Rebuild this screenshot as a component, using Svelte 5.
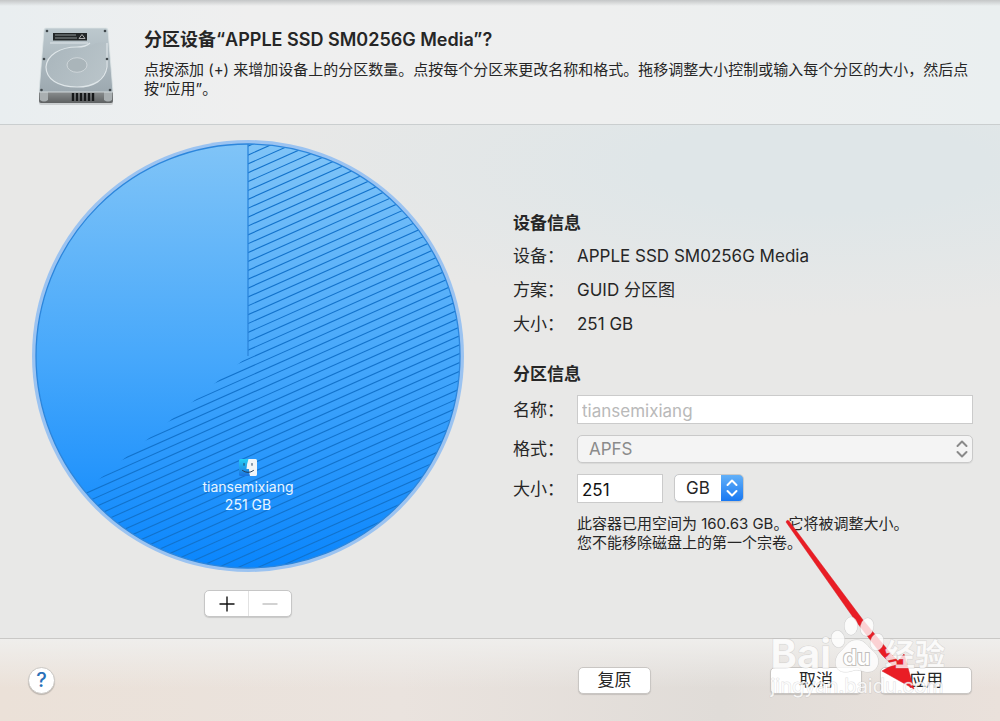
<script>
  const cx = 216, cy = 216, r = 212;
  const slope = 0.445;
  const hatch = Array.from({ length: 76 }, (_, i) => -100 + 8.87 * i + 8.6);
  const used = (160.63 / 251) * 2 * Math.PI;
  const ex = cx + r * Math.sin(used);
  const ey = cy - r * Math.cos(used);
  const sector = `M${cx} ${cy}V${cy - r}A${r} ${r} 0 1 1 ${ex} ${ey}Z`;
  let name = $state('tiansemixiang');
  let size = $state('251');
</script>

<div class="sheet">
  <header>
    <svg class="drive" viewBox="0 0 84 84" aria-hidden="true">
      <defs>
        <linearGradient id="plate" x1="0" y1="0" x2="0" y2="1">
          <stop offset="0" stop-color="#bdc9ce" /><stop offset="1" stop-color="#9da9b0" />
        </linearGradient>
        <linearGradient id="front" x1="0" y1="0" x2="0" y2="1">
          <stop offset="0" stop-color="#8d9192" /><stop offset="1" stop-color="#5e6162" />
        </linearGradient>
        <linearGradient id="disc" x1="0" y1="0" x2="1" y2="1">
          <stop offset="0" stop-color="#a3b0b7" /><stop offset="1" stop-color="#c6d0d4" />
        </linearGradient>
      </defs>
      <rect x="5" y="75" width="74" height="5" rx="2" fill="#0002" />
      <path d="M5 66H79V76Q79 78 77 78H7Q5 78 5 76Z" fill="url(#front)" />
      <path d="M6 67h8v8q-4 3-8 0zM70 67h8v8q-4 3-8 0z" fill="#a9afb1" />
      <path d="M39 68v8M43 68v8M47 68v8M51 68v8M55 68v8M59 68v8" stroke="#161819" stroke-width="2.400" />
      <path d="M12 3H72Q74 3 74 5L79 67H5L10 5Q10 3 12 3Z" fill="url(#plate)" stroke="#dde4e6" stroke-width=".8" />
      <path d="M72 20V42C70 55 60 62 43 62C24 62 12 54 12 42C13 30 26 22 43 22C52 22 58 21 62 18L72 17Z" fill="url(#disc)" opacity=".7" />
      <path d="M16 18H54M73 18V42C71 55 60 62 43 62C24 62 12 54 12 42C13 30 26 22 43 22C49 22 53 21 56 18" fill="none" stroke="#dfe6e9" stroke-width="1.200" />
      <ellipse cx="43" cy="40" rx="10" ry="7.300" fill="#aab5ba" stroke="#d5dcdf" stroke-width=".8" />
      <rect x="19" y="8" width="34" height="7.500" fill="#222627" />
      <path d="M21 10h21M21 13h22" stroke="#8d9496" stroke-width="1" />
      <path d="M45 13.500l3-4 3 4z" fill="none" stroke="#bbb" stroke-width=".9" />
      <g fill="#40484c"><circle cx="13" cy="6" r="1.300" /><circle cx="71" cy="6" r="1.300" /><circle cx="10" cy="34" r="1.300" /><circle cx="73" cy="34" r="1.300" /><circle cx="7.500" cy="65" r="1.300" /><circle cx="76" cy="65" r="1.300" /></g>
    </svg>
    <div class="intro">
      <h1>分区设备“APPLE SSD SM0256G Media”?</h1>
      <p>点按添加 (+) 来增加设备上的分区数量。点按每个分区来更改名称和格式。拖移调整大小控制或输入每个分区的大小，然后点按“应用”。</p>
    </div>
  </header>

  <main>
    <section class="chart">
      <div class="pie">
        <svg viewBox="0 0 432 432" aria-hidden="true">
          <defs>
            <linearGradient id="fill" x1="0" y1="0" x2="0" y2="1">
              <stop offset="0" stop-color="#80c4f7" /><stop offset=".5" stop-color="#47a8fb" /><stop offset="1" stop-color="#0a86fd" />
            </linearGradient>
            <clipPath id="used"><path d={sector} /></clipPath>
          </defs>
          <circle {cx} {cy} r="216" fill="#9bc3f1" />
          <circle {cx} {cy} {r} fill="url(#fill)" />
          <g clip-path="url(#used)" stroke="#1272cb" stroke-width="1.100">
            {#each hatch as y}
              <line x1="0" y1={y + cx * slope} x2="432" y2={y - cx * slope} />
            {/each}
          </g>
          <circle {cx} {cy} {r} fill="none" stroke="#2c86dc" stroke-width="1.300" />
          <path d="M216 4V216" stroke="#2c86dc" stroke-width="1.300" />
        </svg>
        <div class="volume">
          <svg viewBox="0 0 18 17" aria-hidden="true">
            <defs><linearGradient id="face" x1="0" y1="0" x2="0" y2="1"><stop offset="0" stop-color="#26cdf5" /><stop offset="1" stop-color="#1b72e0" /></linearGradient></defs>
            <rect width="18" height="17" rx="1.500" fill="url(#face)" />
            <path d="M9.500 0H16.500Q18 0 18 1.500V15.500Q18 17 16.500 17H11Q10 14 10 10H7.500Q8 4 9.500 0Z" fill="#f1f5f8" />
            <path d="M5 4.500v1.800M13 4.500v1.800M3.500 11.500Q9 15.500 14.500 11.500" fill="none" stroke="#23405e" stroke-width="1" stroke-linecap="round" />
          </svg>
          <span>tiansemixiang</span>
          <span>251 GB</span>
        </div>
      </div>
      <div class="segments">
        <button aria-label="添加"><svg viewBox="0 0 16 16"><path d="M8 .5v15M.5 8h15" stroke="#111" stroke-width="1.400" /></svg></button>
        <button aria-label="移除" disabled><svg viewBox="0 0 16 16"><path d="M.5 8h15" stroke="#b4b4b4" stroke-width="1.200" /></svg></button>
      </div>
    </section>

    <section class="info">
      <h2>设备信息</h2>
      <dl>
        <dt>设备：</dt><dd>APPLE SSD SM0256G Media</dd>
        <dt>方案：</dt><dd>GUID 分区图</dd>
        <dt>大小：</dt><dd>251 GB</dd>
      </dl>
      <h2>分区信息</h2>
      <form class="fields" onsubmit={(e) => e.preventDefault()}>
        <label for="name">名称：</label>
        <input id="name" bind:value={name} disabled />
        <label for="format">格式：</label>
        <div class="select wide">
          <select id="format" disabled><option>APFS</option></select>
          <svg viewBox="0 0 12 18" aria-hidden="true"><path d="M1.500 6L6 1.500L10.500 6M1.500 12L6 16.500L10.500 12" /></svg>
        </div>
        <label for="size">大小：</label>
        <div class="amount">
          <input id="size" bind:value={size} />
          <div class="select unit">
            <select aria-label="单位"><option>GB</option></select>
            <svg viewBox="0 0 12 18" aria-hidden="true"><path d="M1.500 6L6 1.500L10.500 6M1.500 12L6 16.500L10.500 12" /></svg>
          </div>
        </div>
        <p class="note">此容器已用空间为 160.63 GB。它将被调整大小。<br />您不能移除磁盘上的第一个宗卷。</p>
      </form>
    </section>
  </main>

  <footer>
    <button class="help" aria-label="帮助">?</button>
    <button class="push reset">复原</button>
    <button class="push">取消</button>
    <button class="push">应用</button>
  </footer>

  <svg class="arrow" viewBox="0 0 132 176" aria-hidden="true">
    <path d="M1 3Q2 0 4 2L78 101L107 136L113 142L119 135L129 170L97 152L107 146L97 136L70 101Z" fill="#e91d25" stroke="#d81b22" stroke-width=".5" />
  </svg>
  <div class="watermark">
    <div class="brand">
      <span>Bai</span>
      <span class="paw">
        <svg viewBox="0 0 54 58" aria-hidden="true">
          <g fill="#fffc" stroke="#bbb8" stroke-width="1">
            <ellipse cx="7" cy="23" rx="6.500" ry="8.500" transform="rotate(-12 7 23)" />
            <ellipse cx="20" cy="10" rx="6.500" ry="9" />
            <ellipse cx="36" cy="11" rx="6.500" ry="9" transform="rotate(12 36 11)" />
            <ellipse cx="46" cy="26" rx="6.500" ry="8.500" transform="rotate(15 46 26)" />
            <path d="M26 24C34 24 36 30 42 35C51 42 48 56 37 56C32 56 30 54 26 54C22 54 20 56 14 56C3 56 2 43 9 36C16 30 17 24 26 24Z" />
          </g>
        </svg>
        <b>du</b>
      </span>
      <span class="cn">经验</span>
    </div>
    <div class="site">jingyan.baidu.com</div>
  </div>
</div>

<style>
  :global(body) { margin: 0; background: #e8e8e7; }
  .sheet {
    position: relative;
    min-height: 100vh;
    display: flex;
    flex-direction: column;
    color: #262626;
    font: 16px/20px Inter, "Noto Sans CJK SC", sans-serif;
    overflow: hidden;
  }
  * { box-sizing: border-box; }
  h1, h2, p, dl, dd { margin: 0; }
  button, input, select { font: inherit; color: inherit; margin: 0; }
  header {
    display: flex;
    gap: 26px;
    height: 125px;
    padding: 25px 27px 0 34px;
    border-bottom: 1px solid #cacecf;
    background: linear-gradient(#c4c6c7, #dfe1e200 6px), linear-gradient(90deg, #e9eef0, #efefef 25%, #eeefef 60%, #eaeff0);
  }
  .drive { flex: none; width: 84px; height: 84px; }
  .intro { padding-top: 2px; }
  h1 { font-size: 18px; line-height: 26px; font-weight: 600; }
  .intro p { font-size: 15px; line-height: 19px; padding-top: 7px; }
  main {
    flex: 1;
    display: grid;
    grid-template-columns: minmax(0, 432px) minmax(0, 1fr);
    gap: 49px;
    align-items: start;
    padding: 15px 27px 20px 32px;
    background: radial-gradient(ellipse 560px 150px at 82% 8%, #dfe6e8, #dfe6e8 30%, #dfe6e800), #e8e8e7;
  }
  .chart { display: flex; flex-direction: column; align-items: center; gap: 18px; }
  .pie { position: relative; width: 100%; }
  .pie > svg { display: block; width: 100%; }
  .volume {
    position: absolute;
    left: 0; right: 0; bottom: 58px;
    display: flex;
    flex-direction: column;
    align-items: center;
    color: #e8f5ff;
    font-size: 14px;
    line-height: 18px;
  }
  .volume svg { width: 18px; height: 17px; margin-bottom: 2px; }
  .segments { display: flex; border: 1px solid #c6c6c6; border-radius: 5px; background: #fff; box-shadow: 0 1px 1px #0002; }
  .segments button { width: 43px; height: 25px; display: grid; place-items: center; padding: 0; border: 0; background: none; }
  .segments button + button { border-left: 1px solid #e2e2e2; }
  .segments svg { width: 16px; height: 16px; }
  .info { padding-top: 73px; }
  h2 { font-size: 17px; line-height: 20px; font-weight: 600; }
  dl, .fields { display: grid; grid-template-columns: 64px minmax(0, 1fr); }
  dl { row-gap: 14px; padding: 13px 0 30px; font-size: 17px; }
  dt, label { white-space: nowrap; font-size: 17px; }
  .fields { padding-top: 11px; row-gap: 11px; align-items: center; }
  input { height: 29px; min-width: 0; padding: 3px 4px 0; border: 1px solid #cbcbcb; border-radius: 0; background: #fff; font-size: 17px; outline: 0; }
  #name { width: 100%; color: #b9b9b9; }
  #size { width: 86px; color: #111; }
  .select { position: relative; height: 28px; border: 1px solid #c9c9c9; border-radius: 5px; background: #fff; overflow: hidden; box-shadow: 0 1px 1px #0001; }
  .select select { appearance: none; width: 100%; height: 100%; padding: 0 11px; border: 0; background: none; outline: 0; opacity: 1; font-size: 17px; }
  .select svg { position: absolute; top: 4px; width: 12px; height: 18px; fill: none; stroke-width: 2; stroke-linecap: round; stroke-linejoin: round; pointer-events: none; }
  .wide { background: #f4f4f4; }
  .wide select { color: #8b8b8b; }
  .wide svg { right: 4px; stroke: #8a8a8a; }
  .amount { display: flex; gap: 11px; }
  .unit { width: 70px; background: linear-gradient(90deg, #fff 46px, #0000 46px), linear-gradient(#62b0f8, #1878f2); }
  .unit svg { right: 5px; stroke: #fff; }
  .note { grid-column: 2; font-size: 15px; line-height: 19px; }
  footer {
    display: flex;
    align-items: flex-start;
    gap: 18px;
    height: 83px;
    padding: 28px 28px 0;
    border-top: 1px solid #c9c8c6;
    background: linear-gradient(#efeeec, #efeeec00 60%), linear-gradient(90deg, #ebe1d8, #eae3de 40%, #e0dcd8 72%, #eae1db);
  }
  .push { width: 92px; height: 27px; padding: 0; border: 1px solid #c9c6c3; border-radius: 5px; background: #fff; box-shadow: 0 1px 1px #0002; font-size: 17px; line-height: 25px; }
  .reset { width: 73px; margin: 0 101px 0 auto; }
  .help { width: 27px; height: 27px; padding: 0; border: 1px solid #cbc8c4; border-radius: 50%; background: #fff; box-shadow: 0 1px 1px #0003; color: #2a70b8; font-size: 20px; line-height: 25px; font-weight: 500; }
  .arrow { position: absolute; right: 83px; bottom: 26px; width: 132px; height: 176px; pointer-events: none; }
  .watermark { position: absolute; right: 55px; bottom: 23px; color: #fffc; white-space: nowrap; pointer-events: none; -webkit-text-stroke: 1px #b4b4b466; paint-order: stroke fill; }
  .brand { display: flex; align-items: flex-end; font-size: 40px; line-height: 40px; font-weight: 700; }
  .paw { position: relative; width: 54px; height: 58px; }
  .paw svg { display: block; width: 54px; height: 58px; }
  .paw b { position: absolute; left: 12px; bottom: 4px; font-size: 22px; line-height: 26px; font-weight: 600; color: #fff; -webkit-text-stroke: 2px #c2bfbc; }
  .cn { font-size: 30px; }
  .site { font-size: 20px; line-height: 24px; }
</style>
